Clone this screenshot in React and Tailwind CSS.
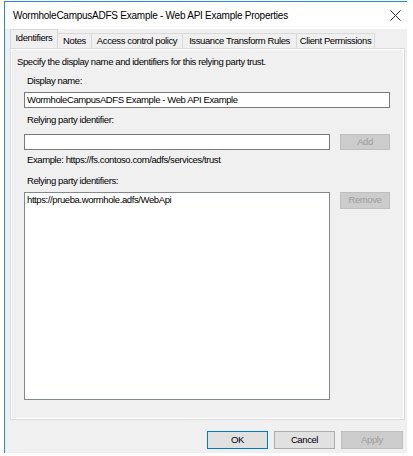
import React from 'react';

const font = { fontFamily: '"Liberation Sans", Arial, sans-serif' };

const tabs = [
  { label: 'Notes', w: 'w-[34px]' },
  { label: 'Access control policy', w: 'w-[91px]' },
  { label: 'Issuance Transform Rules', w: 'w-[114px]' },
  { label: 'Client Permissions', w: 'w-[78px]' },
];

const Label = ({ children, className = '' }) => (
  <div className={`h-[12px] leading-[12px] pl-[3px] ${className}`}>{children}</div>
);

const Button = ({ children, disabled, focused, className = '' }) => (
  <div
    className={`flex items-center justify-center border ${
      disabled
        ? 'bg-[#cccccc] border-[#bfbfbf] text-[#9d9d9d]'
        : focused
        ? 'bg-[#e1e1e1] border-[#0078d7] text-black'
        : 'bg-[#e1e1e1] border-[#adadad] text-black'
    } ${className}`}
  >
    {children}
  </div>
);

export default function App() {
  return (
    <div className="min-h-screen bg-white pl-[4px] pt-[1px]" style={font}>
      <div className="w-[403px] h-[452px] border-l border-t border-[#2a8ad8] flex flex-col">
        {/* title bar */}
        <div className="h-[27px] bg-white flex items-center justify-between pl-[8px] pr-[6px]">
          <span className="text-[10px] tracking-[-0.25px] text-black">
            WormholeCampusADFS Example - Web API Example Properties
          </span>
          <svg width="11" height="11" viewBox="0 0 11 11">
            <path d="M0.5 0.5 L10.5 10.5 M10.5 0.5 L0.5 10.5" stroke="#2b2b2b" strokeWidth="1" fill="none" />
          </svg>
        </div>

        {/* body */}
        <div className="flex-1 bg-[#f0f0f0] pl-[5px] pt-[1px] text-[9.5px] tracking-[-0.4px] text-black">
          {/* tabs */}
          <div className="flex items-end h-[18px]">
            <div className="relative z-10 h-[19px] w-[48px] border border-b-0 border-[#d9d9d9] bg-[#f0f0f0] flex items-center justify-center pb-[2px]">
              Identifiers
            </div>
            {tabs.map((t) => (
              <div
                key={t.label}
                className={`h-[15px] ${t.w} border-t border-r border-[#d9d9d9] bg-[#f0f0f0] flex items-center justify-center`}
              >
                {t.label}
              </div>
            ))}
          </div>

          {/* panel */}
          <div className="w-[395px] h-[372px] border border-[#dadada] shadow-[inset_0_0_0_1px_#ffffff] pl-[6px] pt-[7px]">
            <div className="h-[12px] leading-[12px]">
              Specify the display name and identifiers for this relying party trust.
            </div>
            <div className="ml-[7px]">
              <Label className="mt-[7px]">Display name:</Label>
              <div className="mt-[5px] h-[16px] w-[366px] bg-white border border-[#7a7a7a] flex items-center pl-[2px]">
                WormholeCampusADFS Example - Web API Example
              </div>

              <Label className="mt-[6px]">Relying party identifier:</Label>
              <div className="mt-[8px] flex gap-[10px]">
                <div className="h-[16px] w-[306px] bg-white border border-[#7a7a7a]" />
                <Button disabled className="h-[16px] w-[50px]">Add</Button>
              </div>

              <Label className="mt-[4px]">Example: https://fs.contoso.com/adfs/services/trust</Label>

              <Label className="mt-[9px]">Relying party identifiers:</Label>
              <div className="mt-[5px] flex gap-[10px] items-start">
                <div className="h-[208px] w-[306px] bg-white border border-[#828790] pl-[2px] pt-[1px] leading-[12px]">
                  https://prueba.wormhole.adfs/WebApi
                </div>
                <Button disabled className="h-[17px] w-[50px]">Remove</Button>
              </div>
            </div>
          </div>

          {/* dialog buttons */}
          <div className="mt-[11px] flex justify-end gap-[6px] pr-[4px]">
            <Button focused className="h-[18px] w-[61px]">OK</Button>
            <Button className="h-[18px] w-[61px]">Cancel</Button>
            <Button disabled className="h-[18px] w-[62px]">Apply</Button>
          </div>
        </div>
      </div>
    </div>
  );
}
